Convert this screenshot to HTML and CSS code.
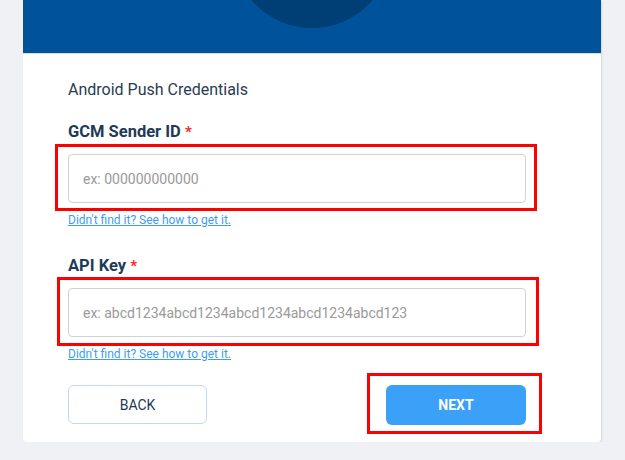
FILE: index.html
```html
<!DOCTYPE html>
<html>
<head>
<meta charset="utf-8">
<link rel="stylesheet" href="styles.css">
</head>
<body>
<div class="page">
  <div class="card">
    <div class="hero"><div class="hero-circle"></div></div>
    <div class="body">
      <div class="title">Android Push Credentials</div>
      <label class="label label-first">GCM Sender ID <span class="req">*</span></label>
      <div class="annot annot-gcm"><input class="field" type="text" placeholder="ex: 000000000000"></div>
      <a class="help" href="#">Didn't find it? See how to get it.</a>
      <label class="label">API Key <span class="req">*</span></label>
      <div class="annot annot-api"><input class="field" type="text" placeholder="ex: abcd1234abcd1234abcd1234abcd1234abcd123"></div>
      <a class="help" href="#">Didn't find it? See how to get it.</a>
      <div class="actions">
        <button class="btn btn-back">BACK</button>
        <div class="annot annot-next"><button class="btn btn-next">NEXT</button></div>
      </div>
    </div>
  </div>
</div>
</body>
</html>
```
FILE: styles.css
```css
html, body {
  margin: 0;
  padding: 0;
  background: #f0f1f5;
  font-family: Roboto, "Liberation Sans", Arial, sans-serif;
}
.page {
  padding: 0 24px 0 23px;
  width: 578px;
}
.card {
  background: #ffffff;
  border-radius: 0 0 3px 3px;
  box-shadow: 1px 1px 2px rgba(0, 0, 0, 0.12);
  overflow: hidden;
}
.hero {
  position: relative;
  height: 54px;
  background: #00529b;
  border-bottom: 1px solid #d9dde3;
  box-sizing: border-box;
  overflow: hidden;
}
.hero-circle {
  position: absolute;
  left: 50%;
  top: -132px;
  width: 160px;
  height: 160px;
  margin-left: -80px;
  border-radius: 50%;
  background: #003f75;
}
.body {
  display: flex;
  flex-direction: column;
  align-items: flex-start;
  padding: 26px 75px 17px 45px;
}
.title {
  font-size: 16px;
  line-height: 20px;
  color: #2a3c50;
}
.label {
  display: block;
  height: 20px;
  margin-top: 28px;
  margin-bottom: 12px;
  font-size: 16.5px;
  line-height: 20px;
  font-weight: 700;
  color: #1f3a57;
}
.label-first {
  margin-top: 22px;
}
.req {
  color: #ff1e1e;
  font-size: 15px;
  line-height: 1;
}
.annot {
  position: relative;
  align-self: stretch;
}
.annot::after {
  content: "";
  position: absolute;
  border: 3px solid #ff0000;
  pointer-events: none;
}
.annot-gcm::after { left: -13px; right: -11px; top: -10px; bottom: -8px; }
.annot-api::after { left: -11px; right: -13px; top: -11px; bottom: -9px; }
.annot-next { align-self: auto; }
.annot-next::after { left: -19px; right: -16px; top: -12px; bottom: -9px; }
.field {
  display: block;
  width: 100%;
  height: 49px;
  box-sizing: border-box;
  border: 1px solid #cfd2d6;
  border-radius: 4px;
  padding: 0 14px;
  font-family: Roboto, "Liberation Sans", Arial, sans-serif;
  font-size: 14px;
  color: #333;
  outline: none;
}
.field::placeholder {
  color: #9a9a9a;
}
.help {
  margin-top: 10px;
  font-size: 12px;
  line-height: 15px;
  height: 15px;
  color: #3d9df3;
  text-decoration: underline;
}
.actions {
  align-self: stretch;
  display: flex;
  justify-content: space-between;
  margin-top: 23px;
}
.btn {
  display: block;
  width: 140px;
  height: 40px;
  border-radius: 6px;
  font-family: Roboto, "Liberation Sans", Arial, sans-serif;
  font-size: 14px;
  cursor: pointer;
}
.btn-back {
  width: 139px;
  height: 39px;
  background: #ffffff;
  border: 1px solid #c3d8ec;
  color: #1f3a57;
  font-weight: 400;
}
.btn-next {
  background: #3ba0f7;
  border: none;
  color: #ffffff;
  font-weight: 700;
}
```
